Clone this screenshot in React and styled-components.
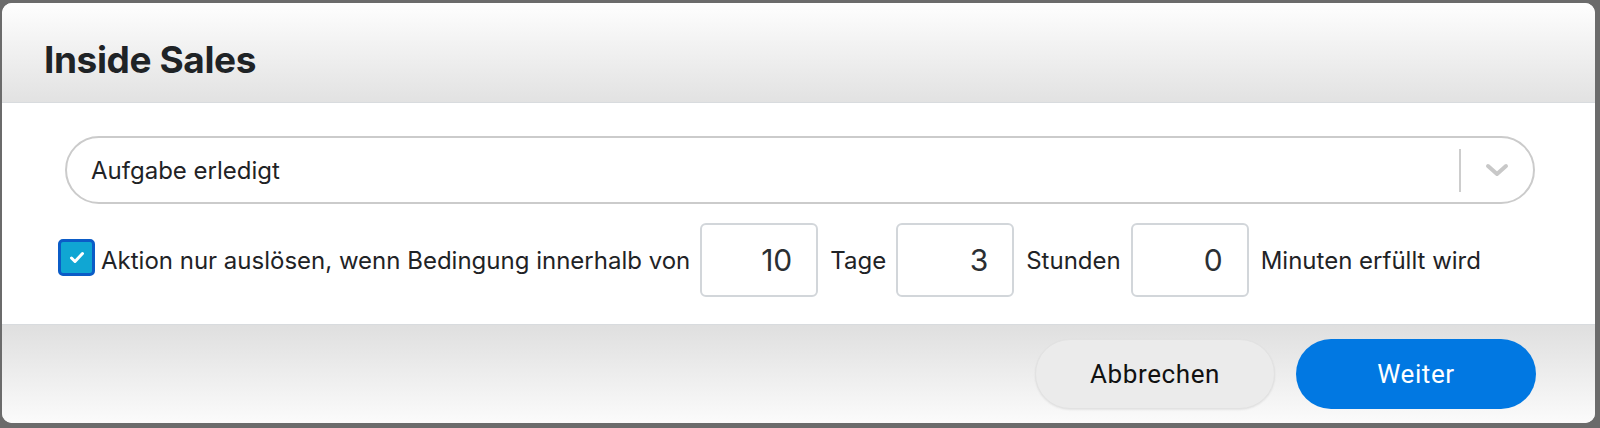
import React from 'react';
import styled, { createGlobalStyle } from 'styled-components';

const Global = createGlobalStyle`
  html, body {
    margin: 0;
    padding: 0;
    background: #6b6b6b;
  }
  * { box-sizing: border-box; }
`;

const Page = styled.div`
  height: 428px;
  padding: 3px 5px 5px 2px;
`;

const Dialog = styled.div`
  width: 1593px;
  height: 420px;
  border-radius: 10px;
  overflow: hidden;
  background: #fff;
  display: flex;
  flex-direction: column;
  font-family: Inter, Lato, sans-serif;
  color: #1f2326;
`;

const Header = styled.div`
  height: 100px;
  flex: none;
  display: flex;
  align-items: center;
  padding-left: 42px;
  background: linear-gradient(to bottom, #fefefe, #e2e2e2);
  border-bottom: 1px solid #d8dbde;
`;

const Title = styled.h1`
  margin: 0;
  margin-top: 14px;
  font-size: 37px;
  font-weight: 700;
  color: #1f2326;
  letter-spacing: -0.4px;
`;

const Body = styled.div`
  height: 221px;
  flex: none;
  padding: 33px 60px 0 56px;
  display: flex;
  flex-direction: column;
  gap: 19px;
`;

const Select = styled.div`
  height: 68px;
  margin-left: 7px;
  border: 2px solid #cbcbcb;
  border-radius: 34px;
  display: flex;
  align-items: center;
  padding-left: 24px;
  font-size: 24px;
`;

const SelectValue = styled.span`
  flex: 1;
`;

const SelectDivider = styled.span`
  width: 2px;
  height: 43px;
  background: #cdcdcd;
`;

const SelectArrow = styled.span`
  width: 72px;
  display: flex;
  justify-content: center;
  align-items: center;
`;

const Row = styled.div`
  display: flex;
  align-items: center;
  font-size: 24px;
`;

const Check = styled.span`
  width: 37px;
  height: 37px;
  border: 3px solid #0b5cc7;
  border-radius: 5px;
  background: #10a6d3;
  display: flex;
  align-items: center;
  justify-content: center;
  margin-right: 6px;
  margin-top: -6px;
`;

const Label = styled.span`
  margin-right: 10px;
  white-space: nowrap;
`;

const NumBox = styled.div`
  width: 118px;
  height: 74px;
  border: 2px solid #d2d6da;
  border-radius: 6px;
  display: flex;
  align-items: center;
  justify-content: flex-end;
  padding-right: 24px;
  font-size: 30px;
  color: #2b2f33;
  margin-right: 12px;
`;

const Footer = styled.div`
  flex: 1;
  display: flex;
  justify-content: flex-end;
  align-items: center;
  gap: 21px;
  padding-right: 59px;
  background: linear-gradient(to bottom, #dfdfdf, #fbfbfb);
  border-top: 1px solid #d8dbde;
`;

const Button = styled.button`
  width: 240px;
  height: 70px;
  border-radius: 35px;
  font-family: Roboto, "Liberation Sans", sans-serif;
  font-size: 26px;
  letter-spacing: 0.6px;
  cursor: pointer;
  border: ${p => (p.$primary ? 'none' : '1px solid #e2e2e2')};
  background: ${p => (p.$primary ? '#0178e2' : '#ebebeb')};
  color: ${p => (p.$primary ? '#fff' : '#111')};
  box-shadow: ${p => (p.$primary ? 'none' : '0 1px 2px rgba(0,0,0,0.08)')};
`;

export default function App() {
  return (
    <>
      <Global />
      <Page>
        <Dialog>
          <Header>
            <Title>Inside Sales</Title>
          </Header>
          <Body>
            <Select>
              <SelectValue>Aufgabe erledigt</SelectValue>
              <SelectDivider />
              <SelectArrow>
                <svg width="24" height="14" viewBox="0 0 24 14">
                  <path d="M3 3 L12 11 L21 3" fill="none" stroke="#c8c8c8" strokeWidth="4" strokeLinecap="round" strokeLinejoin="round" />
                </svg>
              </SelectArrow>
            </Select>
            <Row>
              <Check>
                <svg width="16" height="13" viewBox="0 0 16 13">
                  <path d="M2.5 7 L6 10.5 L13.5 2.5" fill="none" stroke="#fff" strokeWidth="3" strokeLinecap="round" strokeLinejoin="round" />
                </svg>
              </Check>
              <Label>Aktion nur auslösen, wenn Bedingung innerhalb von</Label>
              <NumBox>10</NumBox>
              <Label>Tage</Label>
              <NumBox>3</NumBox>
              <Label>Stunden</Label>
              <NumBox>0</NumBox>
              <Label>Minuten erfüllt wird</Label>
            </Row>
          </Body>
          <Footer>
            <Button>Abbrechen</Button>
            <Button $primary>Weiter</Button>
          </Footer>
        </Dialog>
      </Page>
    </>
  );
}
